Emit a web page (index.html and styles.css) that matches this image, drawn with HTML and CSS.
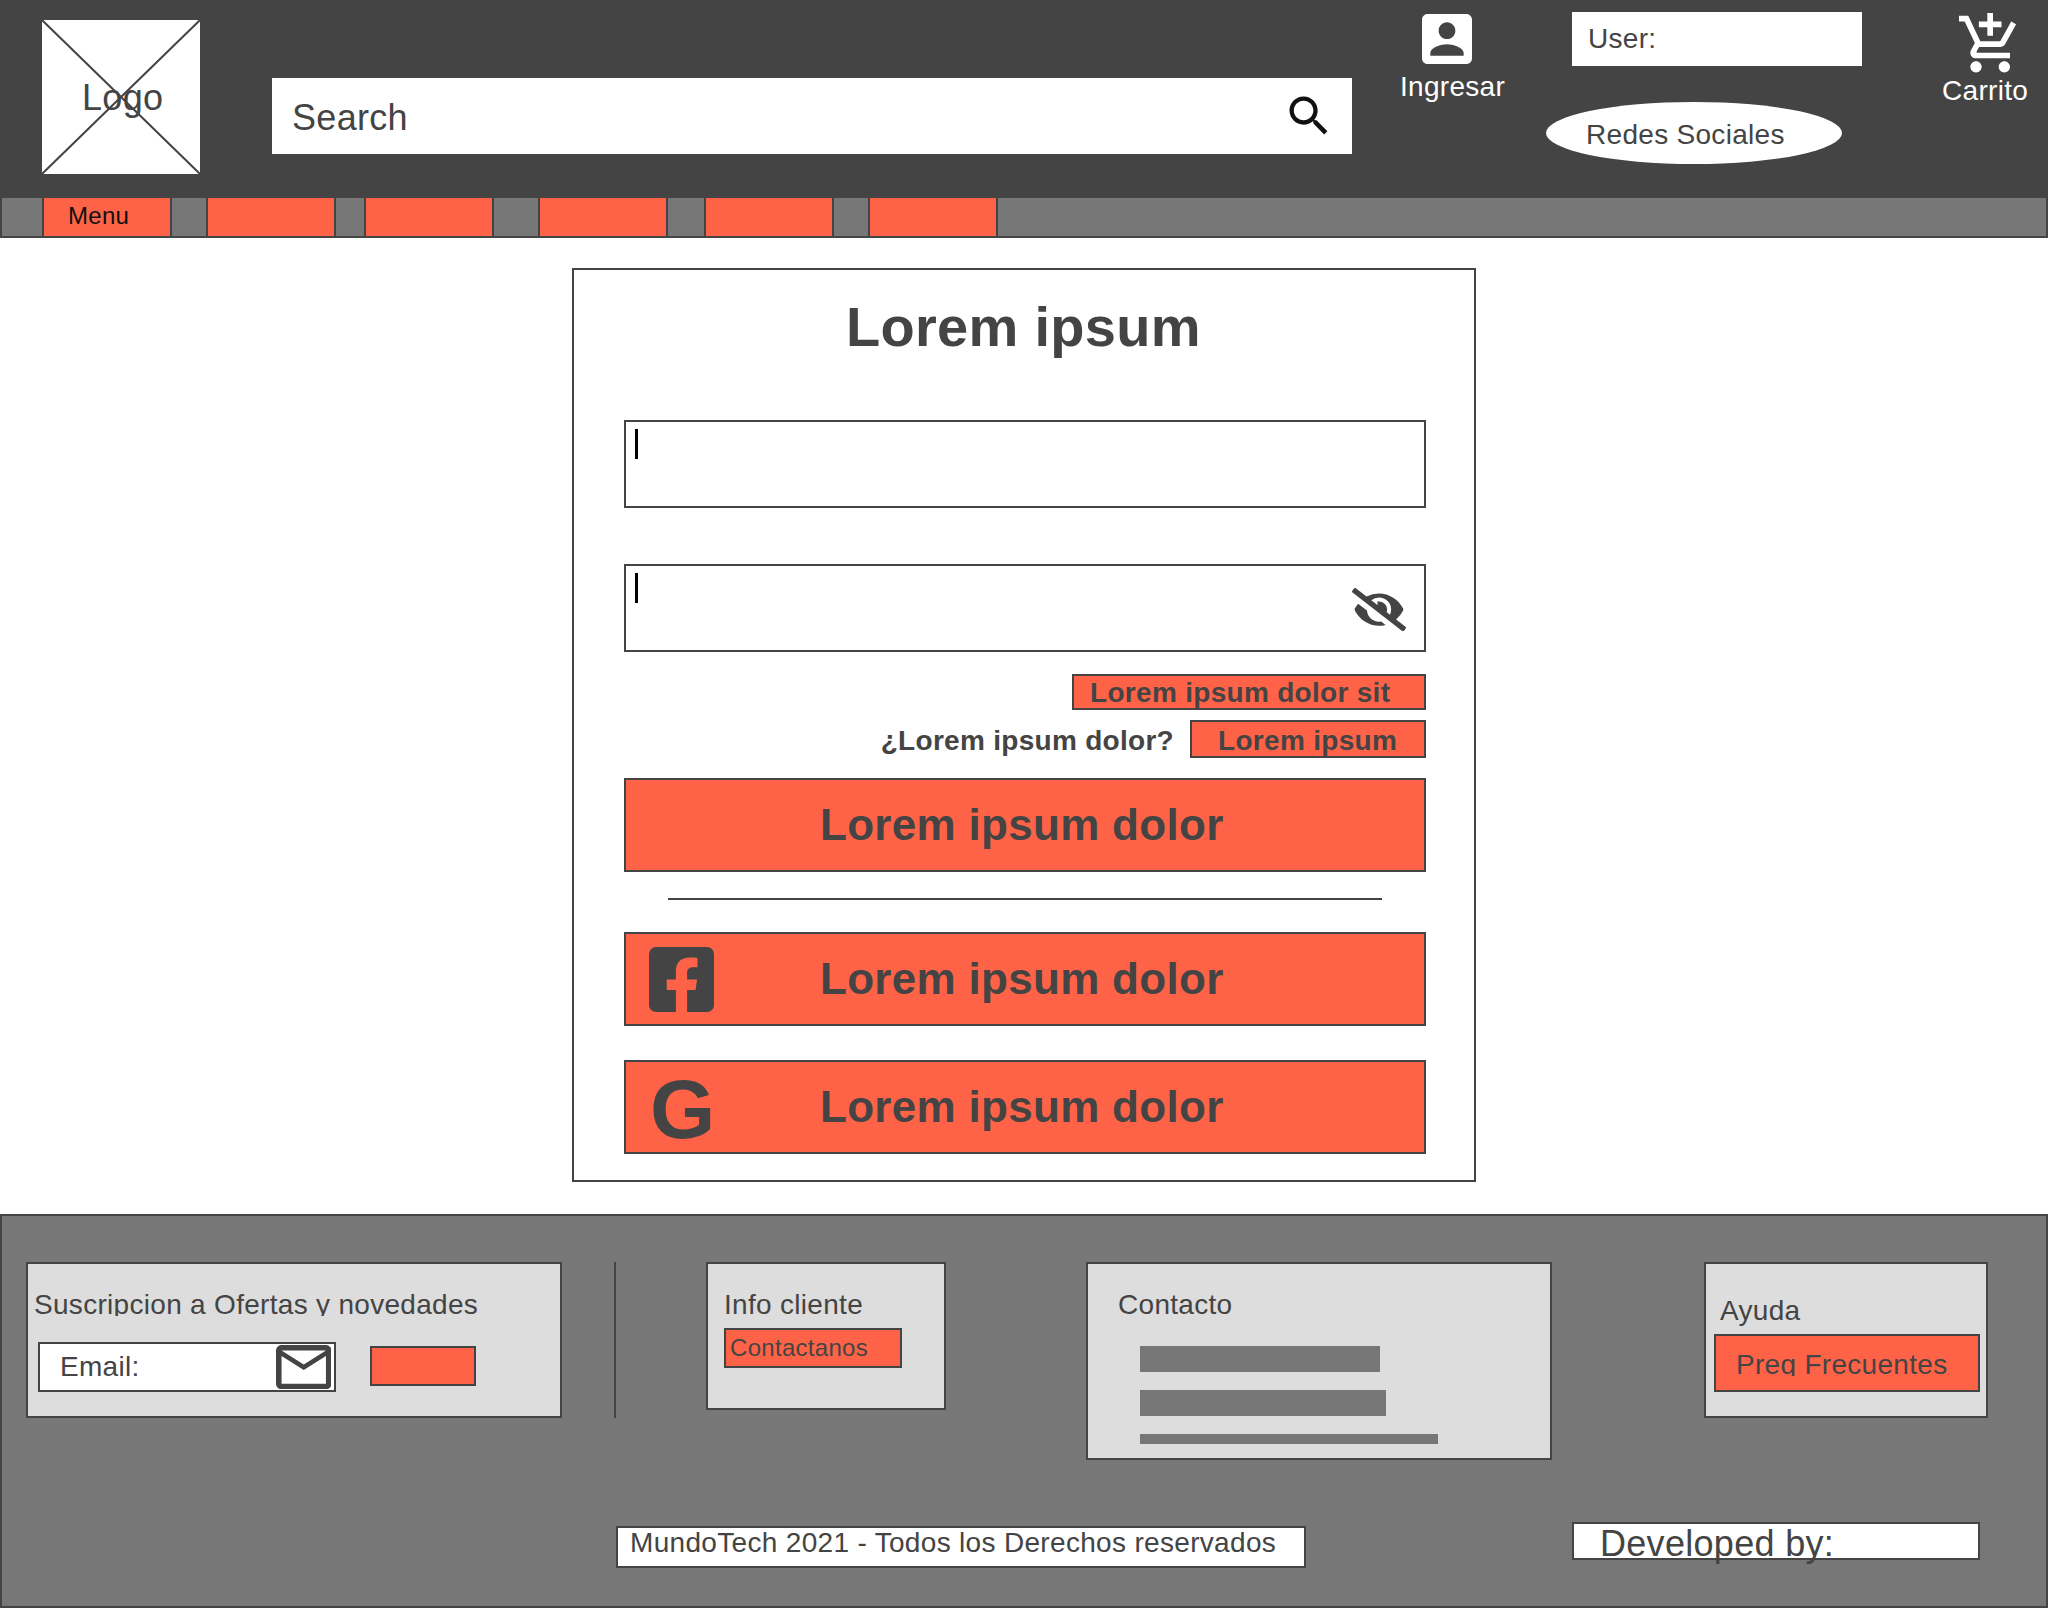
FILE: index.html
```html
<!DOCTYPE html>
<html lang="es">
<head>
<meta charset="utf-8">
<title>MundoTech</title>
<link rel="stylesheet" href="styles.css">
</head>
<body>
<header class="header">
  <div class="logo">
    <svg class="logo-cross" viewBox="0 0 158 154"><path d="M0 0L158 154M158 0L0 154" stroke="#444" stroke-width="2" fill="none"/></svg>
    <span class="t36">Logo</span>
  </div>
  <div class="search">
    <span class="t36">Search</span>
    <svg class="search-icon" viewBox="0 0 24 24"><path d="M15.5 14h-.79l-.28-.27C15.41 12.59 16 11.11 16 9.5 16 5.91 13.09 3 9.5 3S3 5.91 3 9.5 5.91 16 9.5 16c1.61 0 3.09-.59 4.23-1.57l.27.28v.79l5 4.99L20.49 19l-4.99-5zm-6 0C7.01 14 5 11.99 5 9.5S7.01 5 9.5 5 14 7.01 14 9.5 11.99 14 9.5 14z"/></svg>
  </div>
  <a class="login">
    <svg class="login-icon" viewBox="3 3 18 18"><path d="M3 5v14c0 1.1.89 2 2 2h14c1.1 0 2-.9 2-2V5c0-1.1-.9-2-2-2H5c-1.11 0-2 .9-2 2zm12 4c0 1.66-1.34 3-3 3s-3-1.34-3-3 1.34-3 3-3 3 1.34 3 3zm-9 8c0-2 4-3.1 6-3.1s6 1.1 6 3.1v1H6v-1z"/></svg>
    <span class="t28">Ingresar</span>
  </a>
  <div class="social">
    <div class="user"><span class="t28">User:</span></div>
    <div class="networks"><span class="t28">Redes Sociales</span></div>
  </div>
  <a class="cart">
    <svg class="cart-icon" viewBox="1 1 20 21"><path d="M11 9h2V6h3V4h-3V1h-2v3H8v2h3v3zm-4 9c-1.1 0-1.99.9-1.99 2S5.9 22 7 22s2-.9 2-2-.9-2-2-2zm10 0c-1.1 0-1.99.9-1.99 2s.89 2 1.99 2 2-.9 2-2-.9-2-2-2zm-9.83-3.25l.03-.12.9-1.63h7.45c.75 0 1.41-.41 1.75-1.03l3.86-7.01L19.42 4h-.01l-1.1 2-2.76 5H8.53l-.13-.27L6.16 6l-.95-2-.94-2H1v2h2l3.6 7.59-1.35 2.45c-.16.28-.25.61-.25.96 0 1.1.9 2 2 2h12v-2H7.42c-.13 0-.25-.11-.25-.25z"/></svg>
    <span class="t28">Carrito</span>
  </a>
</header>

<nav class="menu">
  <a class="menu-item">Menu</a>
  <a class="menu-item"></a>
  <a class="menu-item narrow-gap"></a>
  <a class="menu-item wide-gap"></a>
  <a class="menu-item mid-gap"></a>
  <a class="menu-item"></a>
</nav>

<main class="main">
  <section class="panel">
    <h1 class="panel-title">Lorem ipsum</h1>
    <div class="field"><span class="caret"></span></div>
    <div class="field second">
      <span class="caret"></span>
      <svg class="eye" viewBox="0 0 640 512"><path d="M320 400c-75.85 0-137.25-58.71-142.9-133.11L72.2 185.82c-13.79 17.3-26.48 35.59-36.72 55.59a32.35 32.35 0 0 0 0 29.19C89.71 376.41 197.07 448 320 448c26.91 0 52.87-4 77.89-10.46L346 397.39a144.13 144.13 0 0 1-26 2.61zm313.82 58.1l-110.55-85.44a331.25 331.25 0 0 0 81.25-102.07 32.35 32.35 0 0 0 0-29.19C550.29 135.59 442.93 64 320 64a308.15 308.15 0 0 0-147.32 37.7L45.46 3.37A16 16 0 0 0 23 6.18L3.37 31.45A16 16 0 0 0 6.18 53.9l588.36 454.73a16 16 0 0 0 22.46-2.81l19.64-25.27a16 16 0 0 0-2.82-22.45zm-183.72-142l-39.3-30.38A94.75 94.75 0 0 0 416 256a94.76 94.76 0 0 0-121.31-92.21A47.65 47.65 0 0 1 304 192a46.64 46.64 0 0 1-1.54 10l-73.61-56.89A142.31 142.31 0 0 1 320 112a143.92 143.92 0 0 1 144 144c0 21.63-5.29 41.79-13.9 60.11z"/></svg>
    </div>
    <a class="link forgot">Lorem ipsum dolor sit</a>
    <div class="signup">
      <span class="question">¿Lorem ipsum dolor?</span>
      <a class="link register">Lorem ipsum</a>
    </div>
    <a class="button">Lorem ipsum dolor</a>
    <div class="rule"></div>
    <a class="button facebook">
      <svg class="fb-icon" viewBox="0 32 448 448"><path d="M400 32H48A48 48 0 0 0 0 80v352a48 48 0 0 0 48 48h137.25V327.69h-63V256h63v-54.64c0-62.15 37-96.48 93.67-96.48 27.14 0 55.52 4.84 55.52 4.84v61h-31.27c-30.81 0-40.42 19.12-40.42 38.73V256h68.78l-11 71.69h-57.78V480H400a48 48 0 0 0 48-48V80a48 48 0 0 0-48-48z"/></svg>
      <span>Lorem ipsum dolor</span>
    </a>
    <a class="button google">
      <span class="g-icon">G</span>
      <span>Lorem ipsum dolor</span>
    </a>
  </section>
</main>

<footer class="footer">
  <div class="footer-row">
    <section class="card newsletter">
      <h2 class="t28 clipped">Suscripcion a Ofertas y novedades</h2>
      <div class="newsletter-form">
        <div class="email">
          <span class="t28">Email:</span>
          <svg class="mail-icon" viewBox="2 4 20 16"><path d="M20 4H4c-1.1 0-2 .9-2 2v12c0 1.1.9 2 2 2h16c1.1 0 2-.9 2-2V6c0-1.1-.9-2-2-2zm0 14H4V8l8 5 8-5v10zm-8-7L4 6h16l-8 5z"/></svg>
        </div>
        <a class="send"></a>
      </div>
    </section>
    <div class="divider"></div>
    <section class="card info">
      <h2 class="t28">Info cliente</h2>
      <a class="contact-link">Contactanos</a>
    </section>
    <section class="card contact">
      <h2 class="t28">Contacto</h2>
      <div class="bar phone"></div>
      <div class="bar mail"></div>
      <div class="bar address"></div>
    </section>
    <section class="card help">
      <h2 class="t28">Ayuda</h2>
      <a class="faq"><span class="t28 clipped">Preg Frecuentes</span></a>
    </section>
  </div>
  <div class="footer-bottom">
    <div class="copyright"><span class="t28">MundoTech 2021 - Todos los Derechos reservados</span></div>
    <div class="developed"><span class="t36">Developed by:</span></div>
  </div>
</footer>
</body>
</html>
```
FILE: styles.css
```css
* { box-sizing: border-box; }

body {
  margin: 0;
  width: 2048px;
  background: #fff;
  color: #444;
  font-family: "Liberation Sans", Arial, sans-serif;
}

h1, h2 { margin: 0; font-weight: 400; }
svg { display: block; flex: none; fill: #444; }
span { white-space: nowrap; }

.t28 { display: block; font-size: 28px; line-height: 31px; letter-spacing: .3px; }
.t36 { display: block; font-size: 36px; line-height: 41px; letter-spacing: .3px; }

/* Header */
.header {
  display: flex;
  align-items: flex-start;
  height: 196px;
  background: #444;
}
.logo {
  position: relative;
  width: 158px;
  height: 154px;
  margin: 20px 0 0 42px;
  padding: 57px 0 0 40px;
  background: #fff;
}
.logo-cross { position: absolute; inset: 0; width: 158px; height: 154px; }
.logo .t36 { position: relative; }
.search {
  display: flex;
  justify-content: space-between;
  width: 1080px;
  height: 76px;
  margin: 78px 0 0 72px;
  padding: 12px 17px 0 20px;
  background: #fff;
}
.search .t36 { padding-top: 7px; }
.search-icon { width: 52px; height: 52px; fill: #111; }
.login { width: 109px; margin: 14px 0 0 48px; color: #fff; }
.login-icon { width: 50px; height: 50px; margin: 0 0 7px 22px; fill: #fff; }
.social { width: 316px; margin: 12px 0 0 37px; }
.user {
  width: 290px;
  height: 54px;
  margin-left: 26px;
  padding: 11px 0 0 16px;
  background: #fff;
}
.networks {
  width: 296px;
  height: 62px;
  margin-top: 36px;
  padding: 17px 0 0 40px;
  border-radius: 50%;
  background: #fff;
}
.cart { width: 92px; margin: 13px 0 0 80px; color: #fff; }
.cart-icon { width: 56.7px; height: 59.5px; margin: 0 0 2.5px 17px; fill: #fff; }

/* Menu */
.menu {
  display: flex;
  gap: 34px;
  height: 42px;
  padding-left: 40px;
  border: 2px solid #444;
  background: #777;
}
.menu-item {
  width: 130px;
  height: 38px;
  padding: 4px 0 0 24px;
  border: solid #444;
  border-width: 0 2px;
  background: #ff6347;
  color: #111;
  font-size: 24px;
  line-height: 27px;
  letter-spacing: .3px;
}
.narrow-gap { margin-left: -6px; }
.wide-gap { margin-left: 10px; }
.mid-gap { margin-left: 2px; }

/* Sign-in panel */
.main { display: flex; justify-content: center; height: 976px; padding-top: 30px; }
.panel {
  display: flex;
  flex-direction: column;
  width: 904px;
  height: 914px;
  padding: 25px 48px 0 50px;
  border: 2px solid #444;
}
.panel-title {
  margin-left: 222px;
  font-size: 56px;
  font-weight: 700;
  line-height: 63px;
  letter-spacing: .3px;
}
.field {
  display: flex;
  justify-content: space-between;
  height: 88px;
  margin-top: 62px;
  padding: 7px 18px 0 9px;
  border: 2px solid #444;
}
.field.second { margin-top: 56px; }
.caret { width: 3px; height: 30px; background: #000; }
.eye { width: 54px; height: 43.2px; margin-top: 14.5px; }
.link {
  display: block;
  flex: none;
  border: 2px solid #444;
  background: #ff6347;
  font-size: 28px;
  font-weight: 700;
  line-height: 31px;
  letter-spacing: .3px;
  white-space: nowrap;
}
.forgot { align-self: flex-end; width: 354px; height: 36px; margin-top: 22px; padding: 1px 0 0 16px; }
.signup { display: flex; justify-content: flex-end; height: 38px; margin-top: 10px; }
.question {
  padding: 5px 16px 0 0;
  font-size: 28px;
  font-weight: 700;
  line-height: 31px;
  letter-spacing: .29px;
}
.register { width: 236px; height: 38px; padding: 3px 0 0 26px; }
.button {
  display: flex;
  align-items: flex-start;
  flex: none;
  height: 94px;
  margin-top: 20px;
  padding: 20px 0 0 194px;
  border: 2px solid #444;
  background: #ff6347;
  font-size: 44px;
  font-weight: 700;
  line-height: 49px;
  letter-spacing: .3px;
}
.rule { width: 714px; height: 2px; margin: 26px 0 0 44px; background: #444; }
.facebook { margin-top: 32px; padding: 12px 0 0 22px; }
.fb-icon { width: 65px; height: 65px; margin: .5px 106.5px 0 .5px; }
.facebook span { padding-top: 8px; }
.google { margin-top: 34px; padding: 0 0 0 24px; }
.google span { padding-top: 20px; }
.google .g-icon { width: 170px; padding-top: 0; font-size: 84px; line-height: 94px; letter-spacing: 0; }

/* Footer */
.footer {
  height: 394px;
  padding: 46px 58px 0 24px;
  border: 2px solid #444;
  background: #777;
}
.footer-row { display: flex; align-items: flex-start; height: 198px; }
.card { flex: none; border: 2px solid #444; background: #ddd; }
.clipped { height: 27px; overflow: hidden; }
.newsletter { width: 536px; height: 156px; padding: 25px 0 0 6px; }
.newsletter-form { display: flex; align-items: flex-start; gap: 34px; margin: 26px 0 0 4px; }
.email {
  display: flex;
  justify-content: space-between;
  width: 298px;
  height: 50px;
  padding: 1px 3px 0 20px;
  border: 2px solid #444;
  background: #fff;
}
.email .t28 { padding-top: 6px; }
.mail-icon { width: 55.5px; height: 44.4px; }
.send { width: 106px; height: 40px; margin-top: 4px; border: 2px solid #444; background: #ff6347; }
.divider { width: 2px; height: 156px; margin-left: 52px; background: #444; }
.info { width: 240px; height: 148px; margin-left: 90px; padding: 25px 0 0 16px; }
.contact-link {
  display: block;
  width: 178px;
  height: 40px;
  margin: 8px 0 0;
  padding: 4px 0 0 4px;
  border: 2px solid #444;
  background: #ff6347;
  font-size: 24px;
  line-height: 27px;
  letter-spacing: .3px;
}
.contact { width: 466px; height: 198px; margin-left: 140px; padding: 25px 0 0 30px; }
.bar { height: 26px; margin: 18px 0 0 22px; background: #777; }
.bar.phone { width: 240px; margin-top: 26px; }
.bar.mail { width: 246px; }
.bar.address { width: 298px; height: 10px; }
.help { width: 284px; height: 156px; margin-left: 152px; padding: 31px 0 0 8px; }
.help h2 { padding-left: 6px; }
.faq {
  display: block;
  width: 266px;
  height: 58px;
  margin-top: 8px;
  padding: 13px 0 0 20px;
  border: 2px solid #444;
  background: #ff6347;
}
.footer-bottom {
  display: flex;
  align-items: flex-start;
  gap: 266px;
  padding: 62px 0 0 590px;
}
.copyright {
  width: 690px;
  height: 42px;
  margin-top: 4px;
  padding: 0 0 0 12px;
  border: 2px solid #444;
  background: #fff;
}
.copyright .t28 { margin-top: -1px; letter-spacing: .32px; }
.developed {
  width: 408px;
  height: 38px;
  padding: 0 0 0 26px;
  border: 2px solid #444;
  background: #fff;
}
.developed .t36 { margin-top: -1px; }
```
